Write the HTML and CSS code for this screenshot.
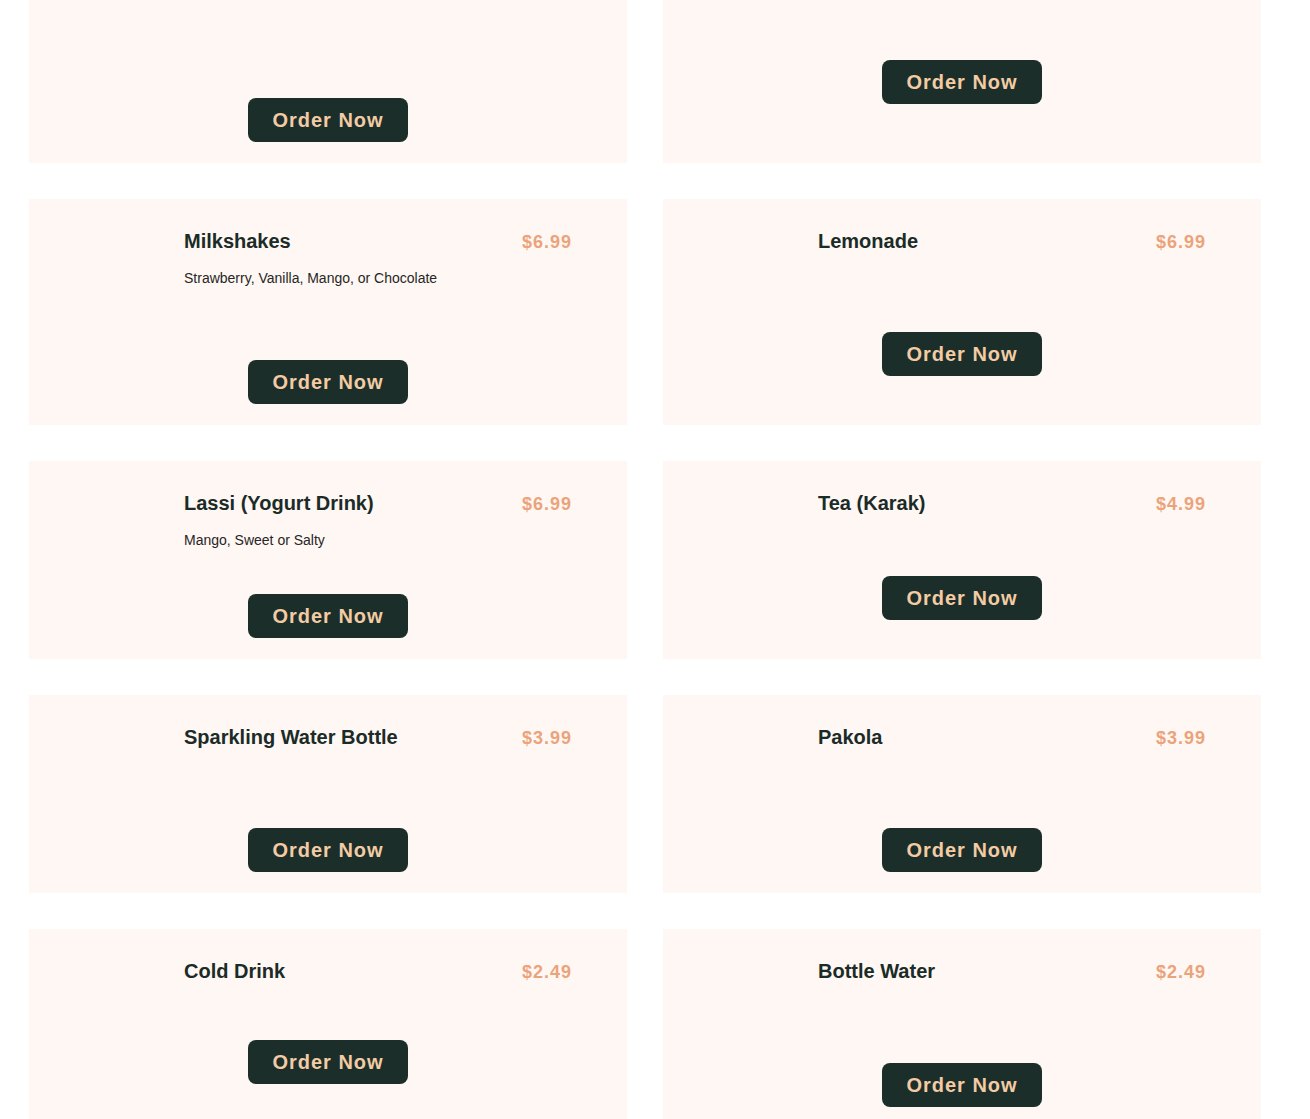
FILE: index.html
```html
<!DOCTYPE html>
<html lang="en">
<head>
    <meta charset="UTF-8">
    <meta name="viewport" content="width=device-width, initial-scale=1.0">
    <title>Drinks Menu</title>
    <link rel="stylesheet" href="styles.css">
</head>
<body>
    <section class="menu">
        <div class="menu-card">
            <div class="item-top">
                <div class="thumb"></div>
            </div>
            <button class="btn-order">Order Now</button>
        </div>
        <div class="menu-card">
            <div class="item-top">
                <div class="thumb thumb-mini"></div>
            </div>
            <button class="btn-order">Order Now</button>
        </div>

        <div class="menu-card">
            <div class="item-top">
                <div class="thumb thumb-tall"></div>
                <div class="item-info">
                    <div class="item-head">
                        <h3>Milkshakes</h3>
                        <span class="price">$6.99</span>
                    </div>
                    <p>Strawberry, Vanilla, Mango, or Chocolate</p>
                </div>
            </div>
            <button class="btn-order">Order Now</button>
        </div>
        <div class="menu-card">
            <div class="item-top">
                <div class="thumb"></div>
                <div class="item-info">
                    <div class="item-head">
                        <h3>Lemonade</h3>
                        <span class="price">$6.99</span>
                    </div>
                </div>
            </div>
            <button class="btn-order">Order Now</button>
        </div>

        <div class="menu-card">
            <div class="item-top">
                <div class="thumb"></div>
                <div class="item-info">
                    <div class="item-head">
                        <h3>Lassi (Yogurt Drink)</h3>
                        <span class="price">$6.99</span>
                    </div>
                    <p>Mango, Sweet or Salty</p>
                </div>
            </div>
            <button class="btn-order">Order Now</button>
        </div>
        <div class="menu-card">
            <div class="item-top">
                <div class="thumb thumb-short"></div>
                <div class="item-info">
                    <div class="item-head">
                        <h3>Tea (Karak)</h3>
                        <span class="price">$4.99</span>
                    </div>
                </div>
            </div>
            <button class="btn-order">Order Now</button>
        </div>

        <div class="menu-card">
            <div class="item-top">
                <div class="thumb"></div>
                <div class="item-info">
                    <div class="item-head">
                        <h3>Sparkling Water Bottle</h3>
                        <span class="price">$3.99</span>
                    </div>
                </div>
            </div>
            <button class="btn-order">Order Now</button>
        </div>
        <div class="menu-card">
            <div class="item-top">
                <div class="thumb"></div>
                <div class="item-info">
                    <div class="item-head">
                        <h3>Pakola</h3>
                        <span class="price">$3.99</span>
                    </div>
                </div>
            </div>
            <button class="btn-order">Order Now</button>
        </div>

        <div class="menu-card">
            <div class="item-top">
                <div class="thumb thumb-shorter"></div>
                <div class="item-info">
                    <div class="item-head">
                        <h3>Cold Drink</h3>
                        <span class="price">$2.49</span>
                    </div>
                </div>
            </div>
            <button class="btn-order">Order Now</button>
        </div>
        <div class="menu-card">
            <div class="item-top">
                <div class="thumb thumb-big"></div>
                <div class="item-info">
                    <div class="item-head">
                        <h3>Bottle Water</h3>
                        <span class="price">$2.49</span>
                    </div>
                </div>
            </div>
            <button class="btn-order">Order Now</button>
        </div>
    </section>
</body>
</html>
```

FILE: styles.css
```css
body {
    font-family: "Liberation Sans", Arial, sans-serif;
    background-color: #ffffff;
    margin: 0;
}

.menu {
    display: grid;
    grid-template-columns: repeat(2, 598px);
    gap: 36px;
    margin: -35px 0 0 29px;
}

.menu-card {
    display: flex;
    flex-direction: column;
    background-color: #fff7f3;
    padding: 21px 55px;
}

.item-top {
    display: flex;
    gap: 25px;
}

.thumb {
    width: 75px;
    height: 112px;
    flex-shrink: 0;
}

.thumb-mini {
    height: 74px;
}

.thumb-tall {
    height: 140px;
}

.thumb-short {
    height: 94px;
}

.thumb-shorter {
    height: 90px;
}

.thumb-big {
    height: 113px;
}

.item-info {
    flex: 1;
    padding-top: 10px;
}

.item-head {
    display: flex;
    justify-content: space-between;
    align-items: baseline;
}

.item-head h3 {
    margin: 0 0 17px;
    font-size: 20px;
    line-height: 23px;
    color: #1b2b27;
}

.price {
    font-size: 18px;
    font-weight: bold;
    letter-spacing: 1px;
    color: #eba37b;
}

.item-info p {
    margin: 0;
    font-size: 14px;
    line-height: 16px;
    color: #262626;
}

.btn-order {
    align-self: center;
    font-family: inherit;
    font-size: 20px;
    font-weight: bold;
    line-height: 24px;
    letter-spacing: 1px;
    padding: 10px 24px;
    border: none;
    border-radius: 8px;
    background-color: #1b2e29;
    color: #f3cba4;
    cursor: pointer;
}

.btn-order:hover {
    opacity: 0.9;
}
```
